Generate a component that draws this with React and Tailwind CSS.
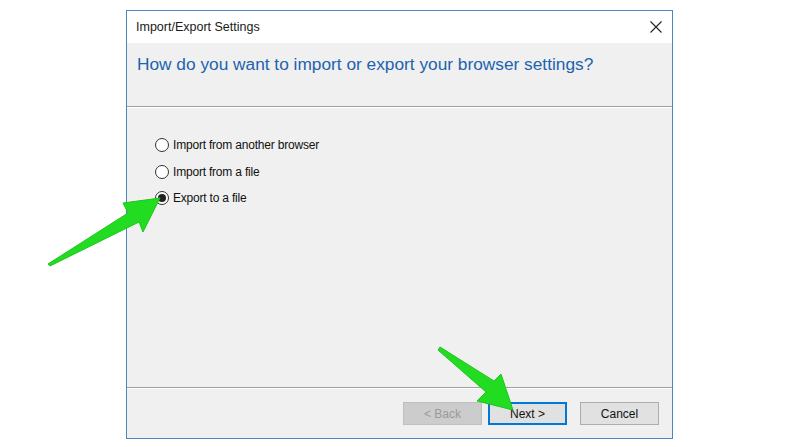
import React from "react";

const options = [
  { id: "browser", label: "Import from another browser" },
  { id: "import", label: "Import from a file" },
  { id: "export", label: "Export to a file" },
];

function Radio({ checked }) {
  return (
    <span className="w-[14px] h-[14px] rounded-full border border-[#333] bg-white flex items-center justify-center shrink-0">
      {checked && <span className="w-[8px] h-[8px] rounded-full bg-[#222]" />}
    </span>
  );
}

function Button({ children, variant }) {
  const styles = {
    disabled: "bg-[#cccccc] border border-[#bfbfbf] text-[#9a9a9a]",
    primary: "bg-[#e1e1e1] border-2 border-[#0078d7] text-[#111]",
    normal: "bg-[#e1e1e1] border border-[#adadad] text-[#111]",
  };
  return (
    <button className={`w-[79px] h-[23px] text-[12px] flex items-center justify-center ${styles[variant]}`}>
      {children}
    </button>
  );
}

// green pointer arrows drawn on top of the dialog
function Arrow({ points }) {
  return (
    <svg className="absolute left-0 top-0 pointer-events-none" width="800" height="447">
      <polygon points={points} fill="#22dc22" stroke="#1fc41f" strokeWidth="1" strokeLinejoin="round" />
    </svg>
  );
}

export default function App() {
  return (
    <div className="relative w-[800px] h-[447px] bg-white font-['Liberation_Sans',Arial,sans-serif] overflow-hidden">
      <div className="pt-[10px] pl-[126px]">
        <div className="w-[547px] h-[429px] border border-[#4b87bd] bg-[#f0f0f0] flex flex-col">
          {/* title bar */}
          <div className="h-[32px] bg-white flex items-center justify-between pl-[9px] pr-[10px]">
            <span className="text-[12.5px] text-[#1a1a1a]">Import/Export Settings</span>
            <svg width="12" height="12" viewBox="0 0 12 12">
              <path d="M0.5 0.5 L11.5 11.5 M11.5 0.5 L0.5 11.5" stroke="#222" strokeWidth="1.1" />
            </svg>
          </div>

          {/* header */}
          <div className="h-[63px] pl-[10px] pt-[10px]">
            <h1 className="text-[17.3px] text-[#1d63ad] leading-[22px]">
              How do you want to import or export your browser settings?
            </h1>
          </div>
          <div className="border-t border-[#a0a0a0] border-b border-b-white" />

          {/* options */}
          <div className="flex-1 pl-[28px] pt-[30px] flex flex-col gap-[12.5px]">
            {options.map((o) => (
              <label key={o.id} className="flex items-center gap-[4px] h-[14px]">
                <Radio checked={o.id === "export"} />
                <span className="text-[12px] text-[#111] tracking-[-0.2px]">{o.label}</span>
              </label>
            ))}
          </div>

          {/* footer */}
          <div className="border-t border-[#a0a0a0] border-b border-b-white" />
          <div className="h-[49px] flex justify-end items-start pt-[13px] pr-[13px]">
            <Button variant="disabled">&lt; Back</Button>
            <div className="w-[6px]" />
            <Button variant="primary">Next &gt;</Button>
            <div className="w-[13px]" />
            <Button variant="normal">Cancel</Button>
          </div>
        </div>
      </div>

      <Arrow points="48,264 128,213 123,203 160,198 143,232 139,222 50,266" />
      <Arrow points="440,347 494,381 501,374 513,410 477,401 486,392 438,350" />
    </div>
  );
}
